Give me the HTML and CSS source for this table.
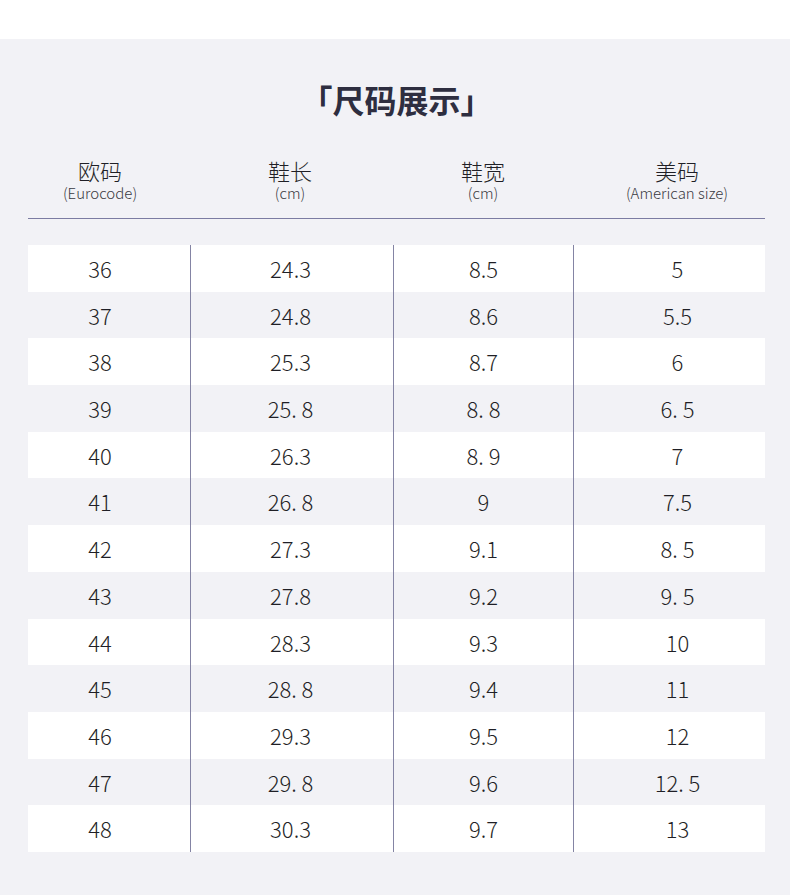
FILE: index.html
```html
<!DOCTYPE html>
<html lang="zh">
<head>
<meta charset="utf-8">
<link rel="stylesheet" href="styles.css">
</head>
<body>
<div class="page">
  <h1 class="title">「尺码展示」</h1>
  <div class="head grid">
    <div class="c c1"><div class="main">欧码</div><div class="sub">(Eurocode)</div></div>
    <div class="c c2"><div class="main">鞋长</div><div class="sub">(cm)</div></div>
    <div class="c c3"><div class="main">鞋宽</div><div class="sub">(cm)</div></div>
    <div class="c c4"><div class="main">美码</div><div class="sub">(American size)</div></div>
  </div>
  <div class="table">
    <div class="row grid"><div class="c c1">36</div><div class="c c2 v">24.3</div><div class="c c3 v">8.5</div><div class="c c4 v">5</div></div>
    <div class="row grid"><div class="c c1">37</div><div class="c c2 v">24.8</div><div class="c c3 v">8.6</div><div class="c c4 v">5.5</div></div>
    <div class="row grid"><div class="c c1">38</div><div class="c c2 v">25.3</div><div class="c c3 v">8.7</div><div class="c c4 v">6</div></div>
    <div class="row grid"><div class="c c1">39</div><div class="c c2 v">25. 8</div><div class="c c3 v">8. 8</div><div class="c c4 v">6. 5</div></div>
    <div class="row grid"><div class="c c1">40</div><div class="c c2 v">26.3</div><div class="c c3 v">8. 9</div><div class="c c4 v">7</div></div>
    <div class="row grid"><div class="c c1">41</div><div class="c c2 v">26. 8</div><div class="c c3 v">9</div><div class="c c4 v">7.5</div></div>
    <div class="row grid"><div class="c c1">42</div><div class="c c2 v">27.3</div><div class="c c3 v">9.1</div><div class="c c4 v">8. 5</div></div>
    <div class="row grid"><div class="c c1">43</div><div class="c c2 v">27.8</div><div class="c c3 v">9.2</div><div class="c c4 v">9. 5</div></div>
    <div class="row grid"><div class="c c1">44</div><div class="c c2 v">28.3</div><div class="c c3 v">9.3</div><div class="c c4 v">10</div></div>
    <div class="row grid"><div class="c c1">45</div><div class="c c2 v">28. 8</div><div class="c c3 v">9.4</div><div class="c c4 v">11</div></div>
    <div class="row grid"><div class="c c1">46</div><div class="c c2 v">29.3</div><div class="c c3 v">9.5</div><div class="c c4 v">12</div></div>
    <div class="row grid"><div class="c c1">47</div><div class="c c2 v">29. 8</div><div class="c c3 v">9.6</div><div class="c c4 v">12. 5</div></div>
    <div class="row grid"><div class="c c1">48</div><div class="c c2 v">30.3</div><div class="c c3 v">9.7</div><div class="c c4 v">13</div></div>
  </div>
</div>
</body>
</html>
```
FILE: styles.css
```css
html, body {
  margin: 0;
  padding: 0;
  background: #ffffff;
}
body {
  font-family: "Noto Sans CJK SC", "Noto Sans", sans-serif;
  color: #333338;
}
.page {
  margin-top: 39px;
  height: 856px;
  background: #f2f2f6;
  padding: 39px 25px 0 28px;
  box-sizing: border-box;
}
.title {
  margin: 0;
  text-align: center;
  font-size: 32px;
  line-height: 42px;
  font-weight: 700;
  color: #2e2e40;
}
.grid {
  display: grid;
  grid-template-columns: 162px 203px 180px 192px;
}
.c {
  text-align: center;
  box-sizing: border-box;
}
.c1 { padding-right: 18px; }
.c2 { padding-right: 3px; }
.c4 { padding-left: 16px; }
.head {
  padding-top: 37px;
  padding-bottom: 16px;
  border-bottom: 1px solid #7c7ca2;
}
.main {
  font-size: 22px;
  line-height: 26px;
  font-weight: 300;
  color: #1f1f26;
}
.sub {
  font-size: 15px;
  line-height: 18px;
  font-weight: 300;
  color: #3a3a42;
  margin-top: 1px;
}
.table {
  margin-top: 26px;
}
.row {
  height: 46.7px;
  background: #ffffff;
}
.row:nth-child(even) {
  background: #f2f2f6;
}
.row .c {
  font-size: 22px;
  line-height: 46.7px;
  font-weight: 300;
  color: #1f1f26;
}
.row .v {
  border-left: 1px solid #8484a4;
}
```
